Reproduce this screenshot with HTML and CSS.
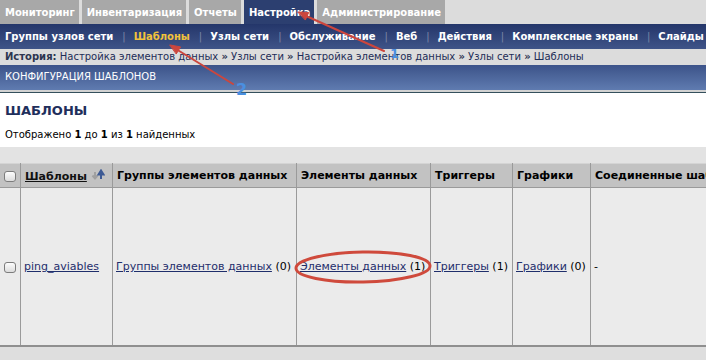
FILE: index.html
```html
<!DOCTYPE html>
<html lang="ru">
<head>
<meta charset="utf-8">
<link rel="stylesheet" href="styles.css">
</head>
<body>
<div class="page">
  <div class="tabs">
    <span class="tab">Мониторинг</span>
    <span class="tab">Инвентаризация</span>
    <span class="tab">Отчеты</span>
    <span class="tab active">Настройка</span>
    <span class="tab">Администрирование</span>
  </div>
  <div class="subnav">
    <span class="sub">Группы узлов сети</span><span class="sep">|</span>
    <span class="sub cur">Шаблоны</span><span class="sep">|</span>
    <span class="sub">Узлы сети</span><span class="sep">|</span>
    <span class="sub">Обслуживание</span><span class="sep">|</span>
    <span class="sub">Веб</span><span class="sep">|</span>
    <span class="sub">Действия</span><span class="sep">|</span>
    <span class="sub">Комплексные экраны</span><span class="sep">|</span>
    <span class="sub">Слайды</span>
  </div>
  <div class="history"><b>История:</b> Настройка элементов данных <b>»</b> Узлы сети <b>»</b> Настройка элементов данных <b>»</b> Узлы сети <b>»</b> Шаблоны</div>
  <div class="confhead">КОНФИГУРАЦИЯ ШАБЛОНОВ</div>
  <div class="panel">
    <h1 class="title">ШАБЛОНЫ</h1>
    <div class="count">Отображено <b>1</b> до <b>1</b> из <b>1</b> найденных</div>
  </div>
  <div class="gap"></div>
  <table class="list">
    <thead>
      <tr>
        <th class="c0"><span class="cb"></span></th>
        <th class="c1"><span class="sortlink">Шаблоны</span> <svg class="sort" width="14" height="12" viewBox="0 0 14 12"><path d="M4 3v6M1.5 6.5L4 9.5 6.5 6.5" stroke="#a0a0a0" stroke-width="2" fill="none"/><path d="M10 10V3M7.5 5.5L10 1.5 12.5 5.5Z" stroke="#3d5a94" stroke-width="2" fill="#3d5a94"/></svg></th>
        <th class="c2">Группы элементов данных</th>
        <th class="c3">Элементы данных</th>
        <th class="c4">Триггеры</th>
        <th class="c5">Графики</th>
        <th class="c6">Соединенные шаблоны</th>
      </tr>
    </thead>
    <tbody>
      <tr>
        <td class="c0"><span class="cb"></span></td>
        <td><a>ping_aviables</a></td>
        <td><a>Группы элементов данных</a> (0)</td>
        <td><a>Элементы данных</a> (1)</td>
        <td><a>Триггеры</a> (1)</td>
        <td><a>Графики</a> (0)</td>
        <td>-</td>
      </tr>
    </tbody>
  </table>
  <div class="footer"></div>
  <svg class="notes" width="706" height="360" viewBox="0 0 706 360">
    <g stroke="#cc463d" fill="#cc463d" stroke-width="2" stroke-linecap="round">
      <line x1="384" y1="51" x2="304" y2="15"/>
      <polygon points="298,12 308.7,12.5 305.5,19.7" stroke-width="1" stroke-linejoin="round"/>
      <line x1="233" y1="84" x2="176" y2="49"/>
      <polygon points="170,45 180.6,46.9 176.4,53.7" stroke-width="1" stroke-linejoin="round"/>
    </g>
    <ellipse cx="363" cy="267" rx="67" ry="15" transform="rotate(-1 363 267)" fill="none" stroke="#cf4a3c" stroke-width="3"/>
    <text x="390" y="58" class="num">1</text>
    <text x="236" y="95" class="num n2">2</text>
  </svg>
</div>
</body>
</html>
```
FILE: styles.css
```css
html, body {
  margin: 0;
  padding: 0;
}
body {
  font-family: "DejaVu Sans", Verdana, sans-serif;
  font-size: 11px;
  color: #000;
  background: #dedede;
  width: 706px;
  height: 360px;
  overflow: hidden;
}
.page {
  position: relative;
  width: 706px;
  height: 360px;
  overflow: hidden;
}
.tabs {
  display: flex;
  gap: 3px;
  height: 24px;
  background: #dcdcdc;
  font-size: 10px;
}
.tab {
  display: flex;
  align-items: center;
  padding: 0 4px 0 5px;
  background: #a8a8a8;
  color: #fff;
  font-weight: bold;
  white-space: nowrap;
}
.tab.active {
  background: #2c3f70;
}
.subnav {
  display: flex;
  align-items: center;
  height: 25px;
  padding-left: 5px;
  background: linear-gradient(#24366a, #3f5488);
  color: #fff;
  font-size: 10px;
  font-weight: bold;
  white-space: nowrap;
}
.sub.cur {
  color: #f2c23c;
}
.sep {
  color: #7d87a8;
  font-weight: normal;
  padding: 0 8px 0 9px;
}
.history {
  height: 16px;
  line-height: 16px;
  padding-left: 5px;
  background: #dcdcdc;
  color: #1d2d57;
  font-size: 10px;
  white-space: nowrap;
}
.history b {
  color: #2d3550;
}
.confhead {
  height: 25px;
  line-height: 24px;
  padding-left: 5px;
  background: linear-gradient(#3c5389, #5f7bb0);
  color: #fff;
  font-size: 10px;
  border-bottom: 2px solid #d2d2d2;
}
.panel {
  background: #fff;
  border-top: 1px solid #34505c;
  height: 54px;
  padding: 0 5px;
}
.title {
  margin: 0;
  padding-top: 10px;
  font-size: 13px;
  line-height: 16px;
  font-weight: bold;
  color: #1f2f5c;
}
.count {
  margin-top: 10px;
  font-size: 10px;
  line-height: 12px;
}
.gap {
  height: 16px;
  background: #e3e3e3;
}
.list {
  border-collapse: collapse;
  width: 760px;
  background: #ebebeb;
}
.list th {
  background: #c2c2c2;
  height: 23px;
  text-align: left;
  font-weight: bold;
  padding: 0 4px;
  border: 1px solid #9a9a9a;
  border-top: 1px solid #d4d4d4;
  white-space: nowrap;
}
.list td {
  height: 157px;
  padding: 0 3px;
  border-left: 1px solid #9a9a9a;
  border-right: 1px solid #9a9a9a;
  border-bottom: 2px solid #8f8f8f;
  white-space: nowrap;
}
.list .c0 {
  width: 13px;
  padding: 0 3px 0 4px;
  border-left: none;
}
.list th.c1 { width: 83px; }
.list th.c2 { width: 175px; }
.list th.c3 { width: 125px; }
.list th.c4 { width: 73px; }
.list th.c5 { width: 69px; }
.sortlink {
  text-decoration: underline;
  color: #111;
}
.sort {
  vertical-align: -1px;
}
.cb {
  display: inline-block;
  width: 10px;
  height: 9px;
  border: 1px solid #7c7c7c;
  border-radius: 3px;
  background: linear-gradient(#fdfdfd, #dcdcdc);
  vertical-align: middle;
}
.list a {
  color: #1f2e6b;
  text-decoration: underline;
}
.footer {
  height: 20px;
  background: #dedede;
}
.notes {
  position: absolute;
  left: 0;
  top: 0;
  pointer-events: none;
}
.num {
  font-family: "DejaVu Sans", sans-serif;
  font-size: 13px;
  font-weight: bold;
  fill: #4a8fe0;
}
.n2 {
  font-size: 16px;
}
```
